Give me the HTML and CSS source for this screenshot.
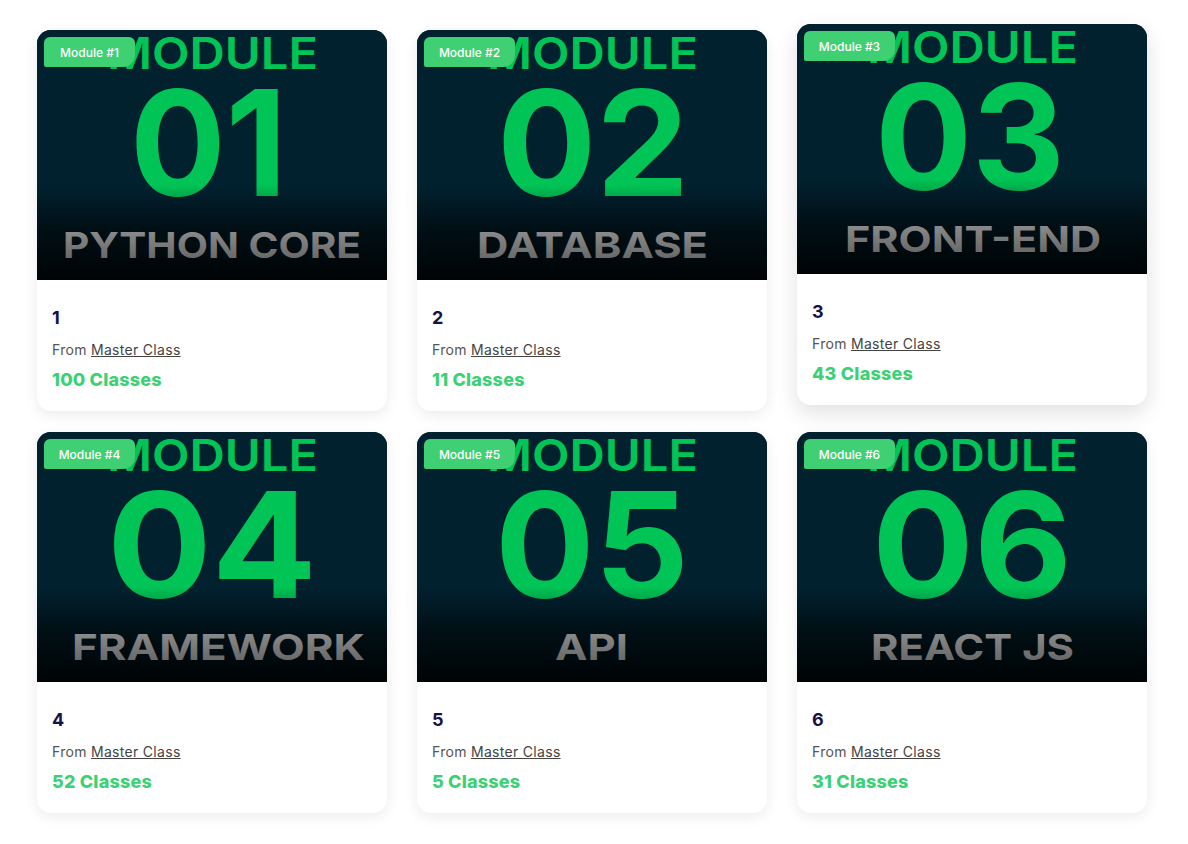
FILE: index.html
```html
<!DOCTYPE html>
<html lang="en">
<head>
<meta charset="utf-8">
<title>Modules</title>
<link rel="stylesheet" href="styles.css">
</head>
<body>
<main class="grid">

  <article class="card">
    <div class="thumb">
      <svg class="poster" viewBox="0 0 350 250" width="350" height="250">
        <defs>
          <linearGradient id="shade" x1="0" y1="0" x2="0" y2="1">
            <stop offset="0" stop-color="#000" stop-opacity="0"/>
            <stop offset="0.62" stop-color="#000" stop-opacity="0"/>
            <stop offset="0.8" stop-color="#000" stop-opacity="0.55"/>
            <stop offset="1" stop-color="#000" stop-opacity="0.9"/>
          </linearGradient>
          <linearGradient id="silver" x1="0" y1="0" x2="0" y2="1">
            <stop offset="0" stop-color="#959595"/>
            <stop offset="1" stop-color="#5e5e5e"/>
          </linearGradient>
        </defs>
        <rect class="poster-bg" width="350" height="250"/>
        <text class="poster-kicker" x="70" y="39" textLength="211" lengthAdjust="spacingAndGlyphs">MODULE</text>
        <text class="poster-num" x="93" y="166" textLength="157" lengthAdjust="spacingAndGlyphs">01</text>
        <rect width="350" height="250" fill="url(#shade)"/>
        <text class="poster-title" x="26" y="228" textLength="298" lengthAdjust="spacingAndGlyphs">PYTHON CORE</text>
      </svg>
      <span class="badge">Module #1</span>
    </div>
    <div class="card-body">
      <h3 class="card-title">1</h3>
      <p class="card-from">From <a href="#">Master Class</a></p>
      <p class="card-count">100 Classes</p>
    </div>
  </article>

  <article class="card">
    <div class="thumb">
      <svg class="poster" viewBox="0 0 350 250" width="350" height="250">
        <rect class="poster-bg" width="350" height="250"/>
        <text class="poster-kicker" x="70" y="39" textLength="211" lengthAdjust="spacingAndGlyphs">MODULE</text>
        <text class="poster-num" x="80" y="166" textLength="192" lengthAdjust="spacingAndGlyphs">02</text>
        <rect width="350" height="250" fill="url(#shade)"/>
        <text class="poster-title" x="60" y="228" textLength="231" lengthAdjust="spacingAndGlyphs">DATABASE</text>
      </svg>
      <span class="badge">Module #2</span>
    </div>
    <div class="card-body">
      <h3 class="card-title">2</h3>
      <p class="card-from">From <a href="#">Master Class</a></p>
      <p class="card-count">11 Classes</p>
    </div>
  </article>

  <article class="card is-raised">
    <div class="thumb">
      <svg class="poster" viewBox="0 0 350 250" width="350" height="250">
        <rect class="poster-bg" width="350" height="250"/>
        <text class="poster-kicker" x="70" y="39" textLength="211" lengthAdjust="spacingAndGlyphs">MODULE</text>
        <text class="poster-num" x="78" y="166" textLength="190" lengthAdjust="spacingAndGlyphs">03</text>
        <rect width="350" height="250" fill="url(#shade)"/>
        <text class="poster-title" x="48" y="228" textLength="256" lengthAdjust="spacingAndGlyphs">FRONT-END</text>
      </svg>
      <span class="badge">Module #3</span>
    </div>
    <div class="card-body">
      <h3 class="card-title">3</h3>
      <p class="card-from">From <a href="#">Master Class</a></p>
      <p class="card-count">43 Classes</p>
    </div>
  </article>

  <article class="card">
    <div class="thumb">
      <svg class="poster" viewBox="0 0 350 250" width="350" height="250">
        <rect class="poster-bg" width="350" height="250"/>
        <text class="poster-kicker" x="70" y="39" textLength="211" lengthAdjust="spacingAndGlyphs">MODULE</text>
        <text class="poster-num" x="70" y="166" textLength="210" lengthAdjust="spacingAndGlyphs">04</text>
        <rect width="350" height="250" fill="url(#shade)"/>
        <text class="poster-title" x="35" y="228" textLength="293" lengthAdjust="spacingAndGlyphs">FRAMEWORK</text>
      </svg>
      <span class="badge">Module #4</span>
    </div>
    <div class="card-body">
      <h3 class="card-title">4</h3>
      <p class="card-from">From <a href="#">Master Class</a></p>
      <p class="card-count">52 Classes</p>
    </div>
  </article>

  <article class="card">
    <div class="thumb">
      <svg class="poster" viewBox="0 0 350 250" width="350" height="250">
        <rect class="poster-bg" width="350" height="250"/>
        <text class="poster-kicker" x="70" y="39" textLength="211" lengthAdjust="spacingAndGlyphs">MODULE</text>
        <text class="poster-num" x="78" y="166" textLength="194" lengthAdjust="spacingAndGlyphs">05</text>
        <rect width="350" height="250" fill="url(#shade)"/>
        <text class="poster-title" x="138" y="228" textLength="73" lengthAdjust="spacingAndGlyphs">API</text>
      </svg>
      <span class="badge">Module #5</span>
    </div>
    <div class="card-body">
      <h3 class="card-title">5</h3>
      <p class="card-from">From <a href="#">Master Class</a></p>
      <p class="card-count">5 Classes</p>
    </div>
  </article>

  <article class="card">
    <div class="thumb">
      <svg class="poster" viewBox="0 0 350 250" width="350" height="250">
        <rect class="poster-bg" width="350" height="250"/>
        <text class="poster-kicker" x="70" y="39" textLength="211" lengthAdjust="spacingAndGlyphs">MODULE</text>
        <text class="poster-num" x="75" y="166" textLength="200" lengthAdjust="spacingAndGlyphs">06</text>
        <rect width="350" height="250" fill="url(#shade)"/>
        <text class="poster-title" x="74" y="228" textLength="203" lengthAdjust="spacingAndGlyphs">REACT JS</text>
      </svg>
      <span class="badge">Module #6</span>
    </div>
    <div class="card-body">
      <h3 class="card-title">6</h3>
      <p class="card-from">From <a href="#">Master Class</a></p>
      <p class="card-count">31 Classes</p>
    </div>
  </article>

</main>
</body>
</html>
```

FILE: styles.css
```css
* { box-sizing: border-box; }

html, body {
  margin: 0;
  padding: 0;
  background: #ffffff;
}

body {
  font-family: "Inter", "Liberation Sans", sans-serif;
  color: #555;
}

.grid {
  display: grid;
  grid-template-columns: repeat(3, 350px);
  column-gap: 30px;
  row-gap: 21px;
  padding: 30px 37px;
}

.card {
  position: relative;
  background: #fff;
  border-radius: 14px;
  overflow: hidden;
  box-shadow: 0 4px 14px rgba(0, 0, 0, 0.08);
}

.card.is-raised {
  transform: translateY(-6px);
  box-shadow: 0 8px 22px rgba(0, 0, 0, 0.12);
}

.thumb {
  height: 250px;
  background: #02212f;
}

.poster {
  display: block;
}

.poster-bg { fill: #01212f; }

.poster-kicker {
  font-family: "Inter", sans-serif;
  font-weight: 600;
  font-size: 44px;
  fill: #00c455;
}

.poster-num {
  font-family: "Inter", sans-serif;
  font-weight: 700;
  font-size: 147px;
  fill: #00c455;
}

.poster-title {
  font-family: "Inter", sans-serif;
  font-weight: 700;
  font-size: 36px;
  fill: url(#silver);
}

.badge {
  position: absolute;
  top: 7px;
  left: 7px;
  height: 30px;
  width: 91px;
  display: flex;
  align-items: center;
  justify-content: center;
  background: #3fd074;
  color: #fff;
  font-size: 12px;
  font-weight: 500;
  border-radius: 6px 6px 12px 2px;
}

.card-body {
  padding: 27px 15px 20px;
}

.card-title {
  margin: 0;
  font-size: 18px;
  line-height: 22px;
  font-weight: 700;
  color: #15124a;
}

.card-from {
  margin: 12px 0 0;
  font-size: 14px;
  line-height: 17px;
  letter-spacing: 0.3px;
  color: #555;
}

.card-from a {
  color: #444;
  text-decoration: underline;
}

.card-count {
  margin: 11px 0 0;
  font-size: 18px;
  line-height: 22px;
  font-weight: 800;
  letter-spacing: 0.2px;
  color: #3dd176;
}
```
